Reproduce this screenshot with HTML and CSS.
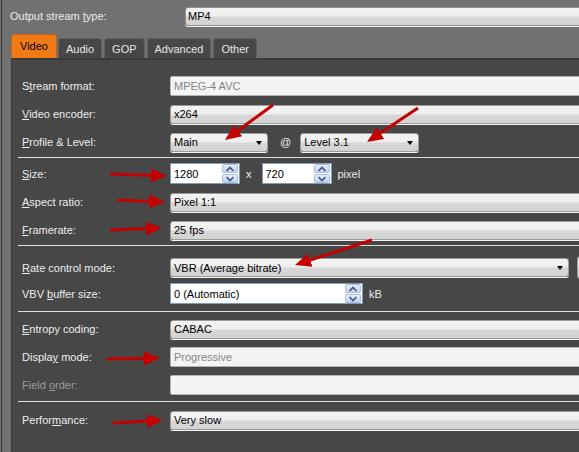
FILE: index.html
```html
<!DOCTYPE html>
<html>
<head>
<meta charset="utf-8">
<link rel="stylesheet" href="styles.css">
</head>
<body>
<div class="app">
  <div class="top">
    <span class="toplbl">Output stream <u>t</u>ype:</span>
    <div class="sel top-sel">MP4</div>
  </div>
  <div class="tabs">
    <div class="tab active">Video</div>
    <div class="tab">Audio</div>
    <div class="tab">GOP</div>
    <div class="tab">Advanced</div>
    <div class="tab">Other</div>
  </div>
  <div class="panel">
    <div class="group g1">
      <div class="row"><span class="lbl">S<u>t</u>ream format:</span><div class="box dis">MPEG-4 AVC</div></div>
      <div class="row"><span class="lbl"><u>V</u>ideo encoder:</span><div class="sel full">x264</div></div>
      <div class="row"><span class="lbl"><u>P</u>rofile &amp; Level:</span>
        <div class="ctl">
          <div class="sel drop w-main">Main<span class="caret"></span></div>
          <span class="at">@</span>
          <div class="sel drop w-level">Level 3.1<span class="caret"></span></div>
        </div>
      </div>
    </div>
    <div class="sep s1"></div>
    <div class="group g2">
      <div class="row tall"><span class="lbl"><u>S</u>ize:</span>
        <div class="ctl">
          <div class="spin w-size"><span class="val">1280</span><span class="spinbtns"><span class="sb up"><svg width="10" height="6" viewBox="0 0 10 6"><path d="M1.5 5 L5 1.5 L8.5 5" fill="none" stroke="#3d5580" stroke-width="1.6"/></svg></span><span class="sb dn"><svg width="10" height="6" viewBox="0 0 10 6"><path d="M1.5 1 L5 4.5 L8.5 1" fill="none" stroke="#3d5580" stroke-width="1.6"/></svg></span></span></div>
          <span class="unit x">x</span>
          <div class="spin w-size"><span class="val">720</span><span class="spinbtns"><span class="sb up"><svg width="10" height="6" viewBox="0 0 10 6"><path d="M1.5 5 L5 1.5 L8.5 5" fill="none" stroke="#3d5580" stroke-width="1.6"/></svg></span><span class="sb dn"><svg width="10" height="6" viewBox="0 0 10 6"><path d="M1.5 1 L5 4.5 L8.5 1" fill="none" stroke="#3d5580" stroke-width="1.6"/></svg></span></span></div>
          <span class="unit">pixel</span>
        </div>
      </div>
      <div class="row"><span class="lbl"><u>A</u>spect ratio:</span><div class="sel full">Pixel 1:1</div></div>
      <div class="row"><span class="lbl"><u>F</u>ramerate:</span><div class="sel full">25 fps</div></div>
    </div>
    <div class="sep s2"></div>
    <div class="group g3">
      <div class="row"><span class="lbl"><u>R</u>ate control mode:</span>
        <div class="ctl">
          <div class="sel drop w-rate">VBR (Average bitrate)<span class="caret"></span></div>
          <div class="btn"></div>
        </div>
      </div>
      <div class="row tall"><span class="lbl">VBV <u>b</u>uffer size:</span>
        <div class="ctl">
          <div class="spin w-vbv"><span class="val">0 (Automatic)</span><span class="spinbtns"><span class="sb up"><svg width="10" height="6" viewBox="0 0 10 6"><path d="M1.5 5 L5 1.5 L8.5 5" fill="none" stroke="#3d5580" stroke-width="1.6"/></svg></span><span class="sb dn"><svg width="10" height="6" viewBox="0 0 10 6"><path d="M1.5 1 L5 4.5 L8.5 1" fill="none" stroke="#3d5580" stroke-width="1.6"/></svg></span></span></div>
          <span class="unit">kB</span>
        </div>
      </div>
    </div>
    <div class="sep s3"></div>
    <div class="group g4">
      <div class="row"><span class="lbl"><u>E</u>ntropy coding:</span><div class="sel full">CABAC</div></div>
      <div class="row"><span class="lbl">Displa<u>y</u> mode:</span><div class="box dis">Progressive</div></div>
      <div class="row"><span class="lbl off">Field <u>o</u>rder:</span><div class="box dis"></div></div>
    </div>
    <div class="sep s4"></div>
    <div class="group g5">
      <div class="row"><span class="lbl">Perfor<u>m</u>ance:</span><div class="sel full">Very slow</div></div>
    </div>
  </div>
  <svg class="arrows" width="579" height="452" viewBox="0 0 579 452">
    <defs>
      <marker id="ah" markerUnits="userSpaceOnUse" markerWidth="17" markerHeight="14" refX="8" refY="7" orient="auto">
        <path d="M0 0 L16 7 L0 14 Z" fill="#c40000"/>
      </marker>
    </defs>
    <g stroke="#c40000" stroke-width="3" fill="none" marker-end="url(#ah)">
      <line x1="273" y1="105" x2="231.5" y2="135.3"/>
      <line x1="418" y1="108" x2="373.7" y2="137.6"/>
      <line x1="110" y1="174" x2="159" y2="175.7"/>
      <line x1="117" y1="200" x2="157" y2="201.7"/>
      <line x1="110" y1="230" x2="154" y2="228.3"/>
      <line x1="372" y1="240" x2="302.6" y2="262.5"/>
      <line x1="107" y1="359" x2="152" y2="358.2"/>
      <line x1="113" y1="423" x2="155" y2="420.5"/>
    </g>
  </svg>
</div>
</body>
</html>
```
FILE: styles.css
```css
html, body {
  margin: 0;
  padding: 0;
  overflow: hidden;
}
body {
  font-family: "Liberation Sans", Arial, sans-serif;
  font-size: 11px;
  color: #ececec;
}
.app {
  position: relative;
  width: 579px;
  height: 452px;
  overflow: hidden;
  background: #717171;
  box-shadow: inset 1px 0 0 #717171, inset 2px 0 0 #3a3a3a;
  display: flex;
  flex-direction: column;
}
.top {
  display: flex;
  align-items: center;
  height: 18px;
  margin-top: 7px;
  padding-left: 10px;
}
.toplbl {
  width: 175px;
  flex: none;
}
.top-sel {
  flex: 1;
  margin-right: -10px;
}
.tabs {
  display: flex;
  align-items: flex-end;
  height: 24px;
  margin: 9px 0 0 11px;
}
.tab {
  box-sizing: border-box;
  height: 20px;
  padding: 0 7px;
  margin-right: 2px;
  display: flex;
  align-items: center;
  background: #474747;
  border: 1px solid #5f5f5f;
  border-bottom: none;
  border-radius: 3px 3px 0 0;
  color: #e6e6e6;
}
.tab.active {
  height: 24px;
  padding: 0 8px 2px;
  margin-right: 1px;
  background: #f07b16;
  border-color: #c86210;
  color: #000;
}
.panel {
  flex: 1;
  background: #474747;
  border-top: 2px solid #3a3a3a;
  border-left: 1px solid #3a3a3a;
  margin-left: 11px;
  margin-right: -20px;
  padding: 16px 0 0 10px;
}
.group {
  display: flex;
  flex-direction: column;
  gap: 8px;
}
.g3 { gap: 7px; }
.row {
  display: grid;
  grid-template-columns: 148px 1fr;
  align-items: center;
  height: 20px;
}
.row.tall { height: 21px; }
.lbl { color: #ececec; white-space: nowrap; }
.lbl.off { color: #9a9a9a; }
.ctl {
  display: flex;
  align-items: center;
}
.sep {
  height: 1px;
  background: #dcdcdc;
  margin-left: -4px;
}
.s1 { margin-top: 5px; margin-bottom: 5px; }
.s2 { margin-top: 5px; margin-bottom: 10px; }
.s3 { margin-top: 7px; margin-bottom: 7px; }
.s4 { margin-top: 6px; margin-bottom: 8px; }

.sel {
  box-sizing: border-box;
  height: 19px;
  position: relative;
  display: flex;
  align-items: center;
  padding-left: 3px;
  color: #000;
  border: 1px solid #9c9c9c;
  border-radius: 3px;
  background: linear-gradient(#f3f3f3 0%, #eeeeee 48%, #d7d7d7 52%, #d3d3d3 100%);
  box-shadow: 0 1px 0 #f4f4f4;
  white-space: nowrap;
}
.top-sel {
  border-color: #8e8e8e;
  padding-left: 2px;
}
.box {
  box-sizing: border-box;
  height: 20px;
  display: flex;
  align-items: center;
  padding-left: 3px;
  border: 1px solid #b4b4b4;
  border-radius: 2px;
  background: #f4f4f4;
  color: #858585;
}
.drop { padding-right: 18px; }
.caret {
  position: absolute;
  right: 5px;
  top: 7px;
  width: 0;
  height: 0;
  border-left: 3.5px solid transparent;
  border-right: 3.5px solid transparent;
  border-top: 4px solid #000;
}
.w-main { width: 98px; }
.w-level { width: 119px; }
.w-rate { width: 399px; }
.at { margin: 0 9px 0 12px; color: #ececec; }
.btn {
  box-sizing: border-box;
  width: 22px;
  height: 23px;
  margin-left: 8px;
  border: 1px solid #9c9c9c;
  border-radius: 3px;
  background: linear-gradient(#f3f3f3 0%, #eeeeee 48%, #d7d7d7 52%, #d3d3d3 100%);
}
.spin {
  box-sizing: border-box;
  height: 21px;
  display: flex;
  align-items: center;
  justify-content: space-between;
  padding-left: 3px;
  padding-right: 1px;
  background: #fff;
  border: 1px solid #7f9db9;
  color: #000;
}
.w-size { width: 70px; }
.w-vbv { width: 193px; }
.spinbtns {
  display: flex;
  flex-direction: column;
  gap: 1px;
}
.sb {
  box-sizing: border-box;
  width: 16px;
  height: 9px;
  display: flex;
  align-items: center;
  justify-content: center;
  border: 1px solid #a9bde0;
  border-radius: 2px;
  background: linear-gradient(#e6eefc, #c2d2ee);
}
.sb svg { display: block; }
.unit { margin-left: 6px; color: #ececec; }
.unit.x { margin-right: 10px; }
.arrows {
  position: absolute;
  left: 0;
  top: 0;
  pointer-events: none;
}
```
